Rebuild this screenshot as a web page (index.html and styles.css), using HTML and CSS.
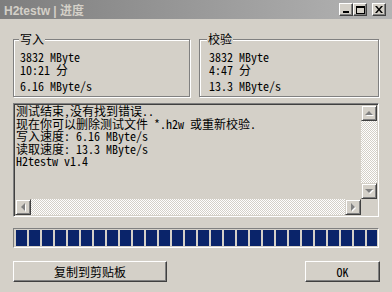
FILE: index.html
```html
<!DOCTYPE html>
<html lang="zh-CN">
<head>
    <meta charset="UTF-8">
    <title>H2testw | 进度</title>
    <link rel="stylesheet" href="styles.css">
</head>
<body>
    <div class="window">
        <div class="titlebar">
            <span class="title">H2testw | 进度</span>
            <div class="caption-buttons">
                <span class="cap-btn">
                    <svg width="8" height="7" viewBox="0 0 8 7"><rect x="1" y="5" width="6" height="2" fill="#000"/></svg>
                </span>
                <span class="cap-btn">
                    <svg width="9" height="8" viewBox="0 0 9 8"><rect x="0.5" y="0.5" width="8" height="7" fill="none" stroke="#000"/><rect x="0" y="0" width="9" height="2" fill="#000"/></svg>
                </span>
                <span class="cap-btn cap-close">
                    <svg width="8" height="7" viewBox="0 0 8 7"><path d="M0 0h2l2 2.5L6 0h2L5 3.5 8 7H6L4 4.5 2 7H0l3-3.5z" fill="#000"/></svg>
                </span>
            </div>
        </div>

        <div class="content">
            <div class="groups">
                <div class="group">
                    <span class="group-title">写入</span>
                    <div class="row">3832 MByte</div>
                    <div class="row">10:21 分</div>
                    <div class="row row-rate">6.16 MByte/s</div>
                </div>
                <div class="group group-verify">
                    <span class="group-title">校验</span>
                    <div class="row">3832 MByte</div>
                    <div class="row">4:47 分</div>
                    <div class="row row-rate">13.3 MByte/s</div>
                </div>
            </div>

            <div class="log">
                <div class="log-text">
                    <div>测试结束,没有找到错误..</div>
                    <div>现在你可以删除测试文件 *.h2w 或重新校验.</div>
                    <div>写入速度: 6.16 MByte/s</div>
                    <div>读取速度: 13.3 MByte/s</div>
                    <div>H2testw v1.4</div>
                </div>
                <div class="vscroll">
                    <span class="sb-btn"><i class="arrow arrow-up"></i></span>
                    <span class="track"></span>
                    <span class="sb-btn"><i class="arrow arrow-down"></i></span>
                </div>
                <div class="hscroll">
                    <span class="sb-btn"><i class="arrow arrow-left"></i></span>
                    <span class="track"></span>
                    <span class="sb-btn"><i class="arrow arrow-right"></i></span>
                </div>
                <div class="corner"></div>
            </div>

            <div class="progress">
                <div class="progress-fill"></div>
            </div>

            <div class="buttons">
                <button class="btn btn-copy">复制到剪贴板</button>
                <button class="btn btn-ok">OK</button>
            </div>
        </div>
    </div>
</body>
</html>
```

FILE: styles.css
```css
body {
    margin: 0;
    font-family: "Noto Sans Mono CJK SC", "Liberation Mono", "Noto Sans CJK SC", monospace;
    font-size: 12px;
    color: #000;
    background: #d4d0c8;
}
.window {
    width: 392px;
    height: 292px;
    background: #d4d0c8;
    display: flex;
    flex-direction: column;
}

/* title bar */
.titlebar {
    height: 19px;
    flex-shrink: 0;
    background: linear-gradient(to right, #7e7e7e, #b4b4b4);
    display: flex;
    align-items: center;
    justify-content: space-between;
    padding: 0 6px 0 4px;
}
.title {
    font: bold 12px "Liberation Sans", "Noto Sans CJK SC", sans-serif;
    color: #d4d0c8;
}
.caption-buttons {
    display: flex;
    align-items: center;
}
.cap-btn {
    width: 14px;
    height: 13px;
    box-sizing: border-box;
    background: #d4d0c8;
    border: 1px solid;
    border-color: #fff #404040 #404040 #fff;
    box-shadow: inset -1px -1px #808080;
    display: flex;
    align-items: center;
    justify-content: center;
}
.cap-close {
    margin-left: 5px;
}

.content {
    padding: 0 13px;
    display: flex;
    flex-direction: column;
}

/* group boxes */
.groups {
    display: flex;
    gap: 9px;
    margin-top: 20px;
}
.group {
    flex: 1;
    position: relative;
    height: 58px;
    box-sizing: border-box;
    padding: 10px 0 0 6px;
    border: 1px solid #808080;
    box-shadow: inset 1px 1px #fff, 1px 1px #fff;
}
.group-verify {
    padding-left: 9px;
}
.group-title {
    position: absolute;
    top: -8px;
    left: 5px;
    padding: 0 1px;
    line-height: 14px;
    background: #d4d0c8;
}
.group-verify .group-title {
    left: 7px;
}
.row {
    line-height: 13px;
    white-space: nowrap;
}
.row-rate {
    margin-top: 3px;
}

/* log box */
.log {
    margin-top: 6px;
    height: 114px;
    box-sizing: border-box;
    padding: 1px;
    border: 1px solid;
    border-color: #808080 #fff #fff #808080;
    box-shadow: inset 1px 1px #404040, inset -1px -1px #d4d0c8;
    display: grid;
    grid-template-columns: 1fr 16px;
    grid-template-rows: 1fr 16px;
}
.log-text {
    padding-left: 1px;
    line-height: 12.5px;
    white-space: nowrap;
}
.vscroll,
.hscroll {
    display: flex;
    background: repeating-conic-gradient(#fff 0 25%, #d4d0c8 0 50%) 0 0 / 2px 2px;
}
.vscroll {
    flex-direction: column;
}
.track {
    flex: 1;
}
.corner {
    background: #d4d0c8;
}
.sb-btn {
    width: 16px;
    height: 16px;
    box-sizing: border-box;
    background: #d4d0c8;
    border: 1px solid;
    border-color: #d4d0c8 #404040 #404040 #d4d0c8;
    box-shadow: inset 1px 1px #fff, inset -1px -1px #808080;
    display: flex;
    align-items: center;
    justify-content: center;
}
.arrow {
    width: 0;
    height: 0;
    border: 4px solid transparent;
    filter: drop-shadow(1px 1px 0 #fff);
}
.arrow-up {
    border-top-width: 0;
    border-bottom-color: #808080;
}
.arrow-down {
    border-bottom-width: 0;
    border-top-color: #808080;
}
.arrow-left {
    border-left-width: 0;
    border-right-color: #808080;
}
.arrow-right {
    border-right-width: 0;
    border-left-color: #808080;
}

/* progress */
.progress {
    margin-top: 11px;
    height: 20px;
    box-sizing: border-box;
    padding: 1px 1px 1px 2px;
    border: 1px solid;
    border-color: #808080 #fff #fff #808080;
}
.progress-fill {
    width: 100%;
    height: 100%;
    background: repeating-linear-gradient(to right, #0a246a 0 11px, transparent 11px 13px);
}

/* buttons */
.buttons {
    margin-top: 13px;
    display: flex;
    justify-content: space-between;
}
.btn {
    height: 21px;
    padding: 0;
    font: 12px "Noto Sans Mono CJK SC", "Liberation Mono", "Noto Sans CJK SC", monospace;
    color: #000;
    background: #d4d0c8;
    border: 1px solid;
    border-color: #fff #404040 #404040 #fff;
    box-shadow: inset -1px -1px #808080;
}
.btn-copy {
    width: 154px;
}
.btn-ok {
    width: 75px;
    margin-right: -1px;
}
```
